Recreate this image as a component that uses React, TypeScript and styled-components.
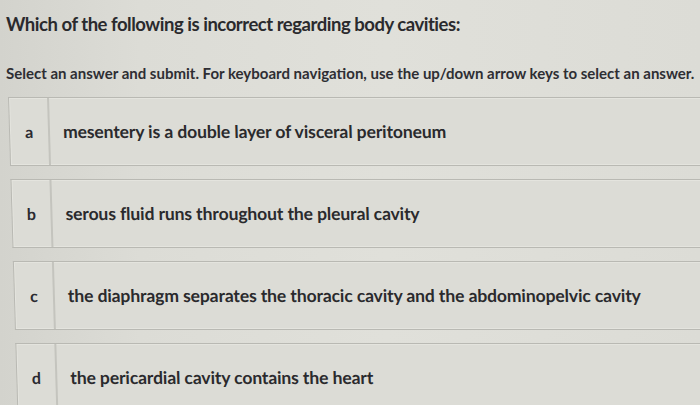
import React from "react";
import styled, { createGlobalStyle } from "styled-components";

const Global = createGlobalStyle`
  html, body { margin: 0; padding: 0; }
  body {
    width: 700px;
    height: 405px;
    overflow: hidden;
    background: linear-gradient(90deg, #d3d3cd 0%, #dcdcd6 20%, #e0e0da 55%, #dcdcd6 100%);
    font-family: Lato, "Open Sans", sans-serif;
    color: #2b2b2e;
  }
`;

const Page = styled.div`
  display: flex;
  flex-direction: column;
  padding: 12px 0 0 6px;
  height: 405px;
  box-sizing: border-box;
  overflow: hidden;
`;

const Title = styled.h1`
  margin: 0;
  font-size: 18.5px;
  font-weight: 700;
  letter-spacing: -0.47px;
  line-height: 24px;
  color: #2a2a2d;
`;

const Instructions = styled.p`
  margin: 27px 0 0 0;
  font-size: 15px;
  font-weight: 700;
  letter-spacing: 0;
  line-height: 20px;
  color: #2e2e33;
  white-space: nowrap;
`;

const Options = styled.div`
  display: flex;
  flex-direction: column;
  gap: 13px;
  margin-top: 14px;
  margin-left: 2px;
  transform: skewX(1.7deg);
  transform-origin: top left;
`;

const Option = styled.div`
  display: grid;
  grid-template-columns: 40px 1fr;
  height: 67px;
  width: 720px;
  border: 1px solid #b9b9b3;
  border-right: none;
  background: #dcdcd6;
  box-shadow: inset 0 0 0 1px #e4e4de;
`;

const Letter = styled.div`
  display: flex;
  align-items: center;
  justify-content: center;
  border-right: 2px solid #c4c4be;
  font-size: 16px;
  font-weight: 700;
  color: #2a2a30;
`;

const Text = styled.div`
  display: flex;
  align-items: center;
  padding-left: 13px;
  font-size: 17.5px;
  font-weight: 700;
  letter-spacing: -0.1px;
  color: #2a2a2d;
  white-space: nowrap;
`;

const answers = [
  { key: "a", text: "mesentery is a double layer of visceral peritoneum" },
  { key: "b", text: "serous fluid runs throughout the pleural cavity" },
  { key: "c", text: "the diaphragm separates the thoracic cavity and the abdominopelvic cavity" },
  { key: "d", text: "the pericardial cavity contains the heart" },
];

export default function App() {
  return (
    <>
      <Global />
      <Page>
        <Title>Which of the following is incorrect regarding body cavities:</Title>
        <Instructions>
          Select an answer and submit. For keyboard navigation, use the up/down arrow keys to select an answer.
        </Instructions>
        <Options role="radiogroup">
          {answers.map((a) => (
            <Option key={a.key} role="radio" aria-checked={false}>
              <Letter>{a.key}</Letter>
              <Text>{a.text}</Text>
            </Option>
          ))}
        </Options>
      </Page>
    </>
  );
}
